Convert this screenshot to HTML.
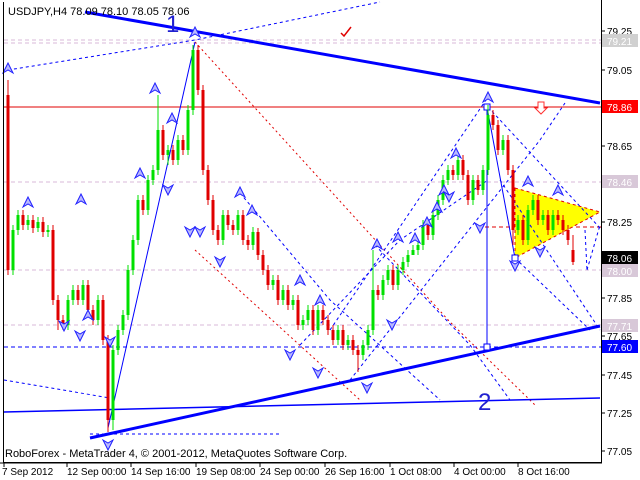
<!DOCTYPE html>
<html><head><meta charset="utf-8"><style>
body{margin:0;background:#fff;width:640px;height:480px;overflow:hidden}
svg{display:block}
text{font-family:"Liberation Sans",sans-serif;font-size:11px}
.ax{font-size:10px}
</style></head><body>
<svg width="640" height="480" viewBox="0 0 640 480" xmlns="http://www.w3.org/2000/svg">
<defs>
<path id="up" d="M-5 5 L0 -5 L5 5 L0 2 Z" fill="#b8b8ff" stroke="#2020ff" stroke-width="1"/>
<path id="dn" d="M-5 -5 L0 5 L5 -5 L0 -2 Z" fill="#b8b8ff" stroke="#2020ff" stroke-width="1"/>
</defs>
<rect width="640" height="480" fill="#fff"/>
<g stroke="#d8b8d8" stroke-dasharray="4,3" stroke-width="1">
<path d="M4 40H601M4 43H601M4 182H601M4 270H601M4 325H601"/>
</g>
<path d="M4 107H601" stroke="#e00000"/>
<path d="M4 347H601" stroke="#0000ff" stroke-dasharray="4,3"/>
<path d="M485 227H601" stroke="#e00000" stroke-dasharray="4,3"/>
<polygon points="515,188 600,212 515,258" fill="#ffff00" stroke="#e00000" stroke-dasharray="3,3"/>
<g stroke="#e00000" stroke-dasharray="2,3" fill="none">
<path d="M195 42L450 322L535 405"/>
<path d="M195 250L360 400"/>
</g>
<g stroke="#0000ff" stroke-dasharray="3,3" fill="none">
<path d="M8 70L195 40L380 2"/>
<path d="M330 330L488 97"/>
<path d="M350 380L540 140L565 103"/>
<path d="M375 245L470 345L510 400"/>
<path d="M488 107L600 228"/>
<path d="M500 180L600 330"/>
<path d="M515 258L590 330"/>
<path d="M240 193L330 300L440 400"/>
<path d="M300 345L400 240L488 180"/>
<path d="M4 380L110 398"/>
<path d="M90 434H280"/>
<path d="M585 230L587 270M587 270L600 225"/>
</g>
<g stroke="#0000ff" fill="none">
<path d="M85 12L600 103" stroke-width="3"/>
<path d="M90 438L600 326" stroke-width="3"/>
<path d="M4 412L600 398" stroke-width="1.5"/>
<path d="M108 428L195 42"/>
<path d="M487 107V347"/>
<path d="M487 107L515 258"/>
<rect x="484" y="104" width="6" height="6" fill="#fff"/>
<rect x="484" y="344" width="6" height="6" fill="#fff"/>
<rect x="512" y="255" width="6" height="6" fill="#fff"/>
</g>
<path stroke="#00e000" fill="none" d="M13 225V275M18 210V235M28 215V230M38 217V232M48 225V237M68 295V330M73 285V305M83 280V305M98 295V325M113 345V430M118 325V355M123 310V335M128 265V320M133 235V275M138 195V245M148 175V215M153 165V185M158 95V175M168 145V165M178 135V165M188 105V155M193 45V115M223 210V245M238 210V235M253 227V250M273 275V290M283 285V305M293 295V310M303 315V330M308 305V325M318 305V335M338 325V345M348 335V350M363 340V360M368 325V350M373 250V335M383 275V300M388 265V285M398 265V290M403 257V275M408 250V267M413 245V255M418 240V255M423 220V250M433 210V240M438 195V220M443 175V205M448 165V185M458 155V180M473 175V205M483 165V195M488 105V175M503 135V155M518 215V235M528 205V245M533 195V215M543 210V225M553 210V235"/>
<path stroke="#e00000" fill="none" d="M8 80V275M23 210V230M33 215V233M43 217V237M53 225V305M58 295V330M63 315V330M78 285V305M88 280V315M93 305V325M103 295V345M108 335V432M143 195V215M163 125V160M173 145V165M183 135V155M198 45V95M203 85V175M208 165V205M213 195V235M218 225V245M228 210V230M233 220V235M243 210V245M248 235V250M258 228V260M263 250V275M268 265V290M278 275V305M288 285V310M298 295V330M313 305V335M323 305V325M328 315V335M333 325V345M343 325V350M353 335V355M358 345V372M378 285V300M393 265V290M428 220V240M453 165V180M463 155V180M468 170V205M478 175V195M493 110V130M498 120V155M508 135V175M513 165V245M523 215V245M538 195V225M548 210V235M558 210V225M563 215V235M568 225V245M573 235V265"/>
<path stroke="#00e000" stroke-width="3" fill="none" d="M13 270V230M18 230V215M28 225V220M38 228V222M48 232V230M68 325V300M73 300V290M83 300V285M98 320V300M113 420V350M118 350V330M123 330V315M128 315V270M133 270V240M138 240V200M148 210V180M153 180V170M158 170V130M168 155V150M178 160V140M188 150V110M193 110V50M223 240V215M238 230V215M253 245V232M273 285V280M283 300V290M293 305V300M303 325V320M308 320V310M318 330V310M338 340V330M348 345V340M363 355V345M368 345V330M373 330V290M383 295V280M388 280V270M398 285V270M403 270V262M408 262V255M413 255V250M418 250V245M423 245V225M433 235V215M438 215V200M443 200V180M448 180V170M458 175V160M473 200V180M483 190V170M488 170V115M503 150V140M518 230V220M528 240V210M533 210V200M543 220V215M553 230V215"/>
<path stroke="#e00000" stroke-width="3" fill="none" d="M8 95V270M23 215V225M33 220V228M43 222V232M53 230V300M58 300V320M63 320V325M78 290V300M88 285V310M93 310V320M103 300V340M108 340V420M143 200V210M163 130V155M173 150V160M183 140V150M198 50V90M203 90V170M208 170V200M213 200V230M218 230V240M228 215V225M233 225V230M243 215V240M248 240V245M258 232V255M263 255V270M268 270V285M278 280V300M288 290V305M298 300V325M313 310V330M323 310V320M328 320V330M333 330V340M343 330V345M353 340V350M358 350V355M378 290V295M393 270V285M428 225V235M453 170V175M463 160V175M468 175V200M478 180V190M493 115V125M498 125V150M508 140V170M513 170V230M523 220V240M538 200V220M548 215V230M558 215V220M563 220V230M568 230V240M573 250V262"/>
<g>
<use href="#up" x="8" y="68"/><use href="#up" x="28" y="202"/><use href="#up" x="140" y="173"/><use href="#up" x="155" y="88"/><use href="#up" x="172" y="118"/><use href="#up" x="195" y="32"/><use href="#up" x="240" y="192"/><use href="#up" x="252" y="210"/><use href="#up" x="88" y="315"/><use href="#up" x="377" y="244"/><use href="#up" x="398" y="237"/><use href="#up" x="415" y="238"/><use href="#up" x="427" y="222"/><use href="#up" x="437" y="207"/><use href="#up" x="444" y="190"/><use href="#up" x="456" y="153"/><use href="#up" x="488" y="97"/><use href="#up" x="528" y="181"/><use href="#up" x="558" y="190"/><use href="#up" x="81" y="199"/><use href="#up" x="300" y="280"/><use href="#up" x="320" y="300"/>
<use href="#dn" x="168" y="190"/><use href="#dn" x="190" y="232"/><use href="#dn" x="200" y="232"/><use href="#dn" x="64" y="326"/><use href="#dn" x="80" y="336"/><use href="#dn" x="110" y="342"/><use href="#dn" x="108" y="445"/><use href="#dn" x="290" y="355"/><use href="#dn" x="318" y="373"/><use href="#dn" x="367" y="388"/><use href="#dn" x="392" y="325"/><use href="#dn" x="449" y="197"/><use href="#dn" x="480" y="228"/><use href="#dn" x="515" y="266"/><use href="#dn" x="540" y="252"/><use href="#dn" x="220" y="262"/>
</g>
<path d="M538 102H544V108H547L541 114L535 108H538Z" fill="#fff" stroke="#ff3030"/>
<path d="M341 33L344 36L351 27" stroke="#e00000" stroke-width="1.5" fill="none"/>
<text x="166" y="32" fill="#2020d0" style="font-size:24px">1</text>
<text x="478" y="410" fill="#2020d0" style="font-size:24px">2</text>
<path d="M3.5 2V462.5H601.5V2" stroke="#000" fill="none"/>
<rect x="602" y="0" width="38" height="480" fill="#fff"/>
<rect x="0" y="463" width="640" height="17" fill="#fff"/>
<path d="M601.5 0V463H0" stroke="#000" fill="none"/>
<g stroke="#000"><path d="M601 31h4M601 70h4M601 146h4M601 222h4M601 298h4M601 336h4M601 375h4M601 413h4M601 451h4M4 463v4M67 463v4M131 463v4M196 463v4M260 463v4M325 463v4M390 463v4M454 463v4M518 463v4"/></g>
<g fill="#000" class="ax">
<text class="ax" x="607" y="35">79.25</text><text class="ax" x="607" y="74">79.05</text><text class="ax" x="607" y="150">78.65</text><text class="ax" x="607" y="226">78.25</text><text class="ax" x="607" y="302">77.85</text><text class="ax" x="607" y="340">77.65</text><text class="ax" x="607" y="379">77.45</text><text class="ax" x="607" y="417">77.25</text><text class="ax" x="607" y="455">77.05</text>
</g>
<rect x="602" y="34" width="36" height="13" fill="#d0d0d0"/><text class="ax" x="607" y="45" fill="#fff">79.21</text>
<rect x="602" y="100" width="36" height="13" fill="#ff0000"/><text class="ax" x="607" y="111" fill="#fff">78.86</text>
<rect x="602" y="175" width="36" height="13" fill="#d8c8d8"/><text class="ax" x="607" y="186" fill="#fff">78.46</text>
<rect x="602" y="251" width="36" height="13" fill="#000"/><text class="ax" x="607" y="262" fill="#fff">78.06</text>
<rect x="602" y="264" width="36" height="13" fill="#d8c8d8"/><text class="ax" x="607" y="275" fill="#fff">78.00</text>
<rect x="602" y="319" width="36" height="13" fill="#d8c8d8"/><text class="ax" x="607" y="330" fill="#fff">77.71</text>
<rect x="602" y="340" width="36" height="13" fill="#0000ff"/><text class="ax" x="607" y="351" fill="#fff">77.60</text>
<g fill="#000">
<text class="ax" x="2" y="475">7 Sep 2012</text><text class="ax" x="67" y="475">12 Sep 00:00</text><text class="ax" x="131" y="475">14 Sep 16:00</text><text class="ax" x="196" y="475">19 Sep 08:00</text><text class="ax" x="260" y="475">24 Sep 00:00</text><text class="ax" x="325" y="475">26 Sep 16:00</text><text class="ax" x="390" y="475">1 Oct 08:00</text><text class="ax" x="454" y="475">4 Oct 00:00</text><text class="ax" x="518" y="475">8 Oct 16:00</text>
<text x="8" y="15">USDJPY,H4  78.09 78.10 78.05 78.06</text>
<text x="5" y="457">RoboForex - MetaTrader 4, © 2001-2012, MetaQuotes Software Corp.</text>
</g>
</svg>
</body></html>
